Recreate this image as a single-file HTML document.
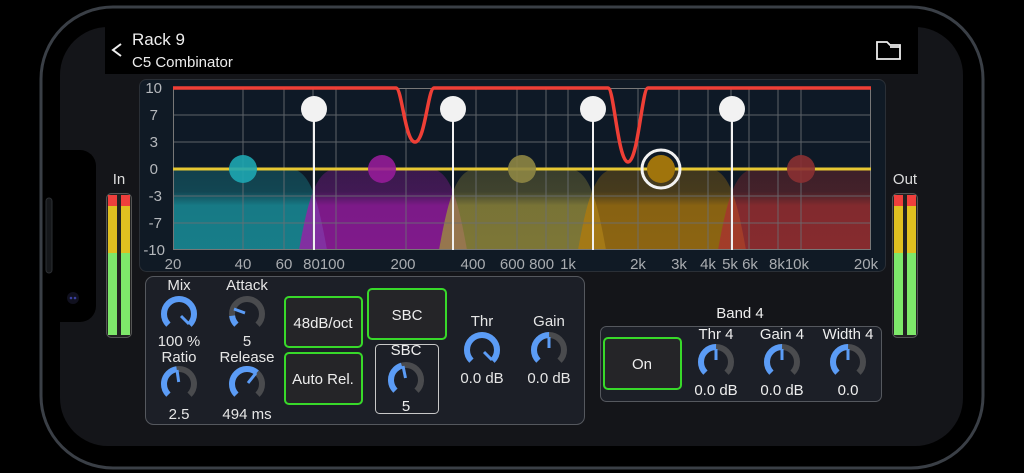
<!DOCTYPE html>
<html><head><meta charset="utf-8"><style>
html,body{margin:0;padding:0;background:#000;width:1024px;height:473px;overflow:hidden}
svg{position:absolute;left:0;top:0}
text{font-family:"Liberation Sans","DejaVu Sans",sans-serif}
</style></head><body>
<svg width="1024" height="473" viewBox="0 0 1024 473">
<defs>
<linearGradient id="gc" x1="0" y1="169" x2="0" y2="250" gradientUnits="userSpaceOnUse"><stop offset="0" stop-color="#1a9aa5" stop-opacity=".3"/><stop offset=".28" stop-color="#1a9aa5" stop-opacity=".35"/><stop offset=".45" stop-color="#1a9aa5" stop-opacity=".75"/><stop offset="1" stop-color="#1a9aa5" stop-opacity=".78"/></linearGradient>
<linearGradient id="gm" x1="0" y1="169" x2="0" y2="250" gradientUnits="userSpaceOnUse"><stop offset="0" stop-color="#a01aa8" stop-opacity=".3"/><stop offset=".28" stop-color="#a01aa8" stop-opacity=".35"/><stop offset=".45" stop-color="#a01aa8" stop-opacity=".75"/><stop offset="1" stop-color="#a01aa8" stop-opacity=".78"/></linearGradient>
<linearGradient id="gy" x1="0" y1="169" x2="0" y2="250" gradientUnits="userSpaceOnUse"><stop offset="0" stop-color="#9c913c" stop-opacity=".3"/><stop offset=".28" stop-color="#9c913c" stop-opacity=".35"/><stop offset=".45" stop-color="#9c913c" stop-opacity=".75"/><stop offset="1" stop-color="#9c913c" stop-opacity=".78"/></linearGradient>
<linearGradient id="go" x1="0" y1="169" x2="0" y2="250" gradientUnits="userSpaceOnUse"><stop offset="0" stop-color="#b07a0c" stop-opacity=".3"/><stop offset=".28" stop-color="#b07a0c" stop-opacity=".35"/><stop offset=".45" stop-color="#b07a0c" stop-opacity=".75"/><stop offset="1" stop-color="#b07a0c" stop-opacity=".78"/></linearGradient>
<linearGradient id="gr" x1="0" y1="169" x2="0" y2="250" gradientUnits="userSpaceOnUse"><stop offset="0" stop-color="#a83030" stop-opacity=".3"/><stop offset=".28" stop-color="#a83030" stop-opacity=".35"/><stop offset=".45" stop-color="#a83030" stop-opacity=".75"/><stop offset="1" stop-color="#a83030" stop-opacity=".78"/></linearGradient>
<g id="k" fill="none" stroke-width="6"><circle r="15" stroke="#4a4b4e" stroke-dasharray="70.69 100" transform="rotate(135)"/></g>
</defs>
<rect x="41" y="7" width="942" height="461" rx="72" fill="#000" stroke="#3a3f46" stroke-width="3"/>
<rect x="60" y="27" width="903" height="419" rx="48" fill="#141519"/>
<path d="M50,150 H80 a16,16 0 0 1 16,16 V306 a16,16 0 0 1 -16,16 H50 Z" fill="#000"/>
<rect x="46" y="198" width="6" height="75" rx="3" fill="#16181b" stroke="#2c2f33"/>
<circle cx="73" cy="298" r="6" fill="#10101e"/><circle cx="71" cy="298" r="1.3" fill="#3a40a0"/><circle cx="75" cy="298" r="1.3" fill="#3a40a0"/>
<rect x="105" y="27" width="813" height="47" fill="#000"/>
<path d="M121,44 L113,50 L121,56" fill="none" stroke="#eee" stroke-width="2"/>
<text x="132" y="45" font-size="17" fill="#eee">Rack 9</text>
<text x="132" y="67" font-size="15" fill="#eee">C5 Combinator</text>
<path d="M877,42 H887 L890,45 H900 V59 H877 Z M890,47 H900" fill="none" stroke="#eee" stroke-width="1.8"/>
<rect x="139.5" y="79.5" width="746" height="192" rx="7" fill="#101a25" stroke="#2a2f36"/>
<rect x="173" y="88" width="698" height="162" fill="#0e1926"/>
<g fill="#b5b8bc" font-size="15" text-anchor="end">
<text x="162" y="93">10</text><text x="158" y="120">7</text><text x="158" y="147">3</text><text x="158" y="174">0</text><text x="162" y="201">-3</text><text x="162" y="228">-7</text><text x="165" y="255">-10</text></g>
<path d="M173,250 V169 H290 C310,169 318,200 327,250 Z" fill="url(#gc)"/>
<path d="M299,250 C308,200 316,169 336,169 H430 C450,169 458,200 467,250 Z" fill="url(#gm)"/>
<path d="M439,250 C448,200 456,169 476,169 H569 C589,169 597,200 606,250 Z" fill="url(#gy)"/>
<path d="M578,250 C587,200 595,169 615,169 H709 C729,169 737,200 746,250 Z" fill="url(#go)"/>
<path d="M718,250 C727,200 735,169 755,169 H871 V250 Z" fill="url(#gr)"/>
<g stroke="#6b6f74" stroke-width="1" opacity=".85">
<path d="M173,115H871M173,142H871M173,196H871M173,223H871"/>
<path d="M243,88V250M284,88V250M313,88V250M336,88V250M406,88V250M476,88V250M517,88V250M546,88V250M568,88V250M638,88V250M679,88V250M708,88V250M731,88V250M749,88V250M778,88V250M801,88V250"/>
</g>
<rect x="173.5" y="88.5" width="697" height="161" fill="none" stroke="#777" stroke-width="1"/>
<g fill="#a9acb0" font-size="15" text-anchor="middle">
<text x="173" y="269">20</text><text x="243" y="269">40</text><text x="284" y="269">60</text><text x="324" y="269">80100</text><text x="403" y="269">200</text><text x="473" y="269">400</text><text x="527" y="269">600 800</text><text x="568" y="269">1k</text><text x="638" y="269">2k</text><text x="679" y="269">3k</text><text x="708" y="269">4k</text><text x="740" y="269">5k 6k</text><text x="789" y="269">8k10k</text><text x="866" y="269">20k</text></g>
<line x1="173" y1="169" x2="871" y2="169" stroke="#e7c832" stroke-width="3"/>
<circle cx="243" cy="169" r="14" fill="#1ea6b1" opacity=".9"/>
<circle cx="382" cy="169" r="14" fill="#951c98" opacity=".9"/>
<circle cx="522" cy="169" r="14" fill="#8e8644" opacity=".9"/>
<circle cx="661" cy="169" r="14" fill="#a0740c"/>
<circle cx="661" cy="169" r="19" fill="none" stroke="#f2f2f2" stroke-width="3"/>
<circle cx="801" cy="169" r="14" fill="#8a3032" opacity=".9"/>
<path d="M173,88 H396 C402,88 405,142 415,142 C425,142 428,88 434,88 H608 C614,88 618,162 628,162 C638,162 642,88 648,88 H871" fill="none" stroke="#ef3f36" stroke-width="3.5"/>
<g stroke="#f2f2f2" stroke-width="2"><path d="M314,109V250M453,109V250M593,109V250M732,109V250"/></g>
<g fill="#f2f2f2"><circle cx="314" cy="109" r="13"/><circle cx="453" cy="109" r="13"/><circle cx="593" cy="109" r="13"/><circle cx="732" cy="109" r="13"/></g>
<g>
<text x="119" y="184" font-size="15" fill="#ddd" text-anchor="middle">In</text>
<rect x="106.5" y="193.5" width="25" height="144" rx="5" fill="#222" stroke="#555"/>
<rect x="108" y="195" width="9" height="11" fill="#ef3f3c"/><rect x="108" y="206" width="9" height="47" fill="#e0c020"/><rect x="108" y="253" width="9" height="82" fill="#7ee86a"/>
<rect x="121" y="195" width="9" height="11" fill="#ef3f3c"/><rect x="121" y="206" width="9" height="47" fill="#e0c020"/><rect x="121" y="253" width="9" height="82" fill="#7ee86a"/>
<text x="905" y="184" font-size="15" fill="#ddd" text-anchor="middle">Out</text>
<rect x="892.5" y="193.5" width="25" height="144" rx="5" fill="#222" stroke="#555"/>
<rect x="894" y="195" width="9" height="11" fill="#ef3f3c"/><rect x="894" y="206" width="9" height="47" fill="#e0c020"/><rect x="894" y="253" width="9" height="82" fill="#7ee86a"/>
<rect x="907" y="195" width="9" height="11" fill="#ef3f3c"/><rect x="907" y="206" width="9" height="47" fill="#e0c020"/><rect x="907" y="253" width="9" height="82" fill="#7ee86a"/>
</g>
<rect x="145.5" y="276.5" width="439" height="148" rx="8" fill="#1c1f27" stroke="#55585e"/>
<g font-size="15" fill="#e6e6e6" text-anchor="middle">
<text x="179" y="290">Mix</text><text x="247" y="290">Attack</text>
<text x="179" y="346">100 %</text><text x="247" y="346">5</text>
<text x="179" y="362">Ratio</text><text x="247" y="362">Release</text>
<text x="179" y="419">2.5</text><text x="247" y="419">494 ms</text>
<text x="482" y="326">Thr</text><text x="549" y="326">Gain</text>
<text x="482" y="383">0.0 dB</text><text x="549" y="383">0.0 dB</text>
</g>
<g stroke="#38d92a" stroke-width="2" fill="#252528">
<rect x="285" y="297" width="77" height="50" rx="4"/>
<rect x="285" y="353" width="77" height="51" rx="4"/>
<rect x="368" y="289" width="78" height="50" rx="4"/>
</g>
<rect x="375.5" y="344.5" width="63" height="69" rx="4" fill="none" stroke="#c8c8c8"/>
<g font-size="15" fill="#eee" text-anchor="middle">
<text x="323" y="328">48dB/oct</text><text x="323" y="384">Auto Rel.</text>
<text x="407" y="320">SBC</text><text x="406" y="355">SBC</text><text x="406" y="411">5</text>
<text x="740" y="318">Band 4</text>
</g>
<rect x="600.5" y="326.5" width="281" height="75" rx="6" fill="#1c1f27" stroke="#55585e"/>
<g stroke="#38d92a" stroke-width="2" fill="#252528"><rect x="604" y="338" width="77" height="51" rx="4"/></g>
<g font-size="15" fill="#eee" text-anchor="middle">
<text x="642" y="369">On</text>
<text x="716" y="339">Thr 4</text><text x="782" y="339">Gain 4</text><text x="848" y="339">Width 4</text>
<text x="716" y="395">0.0 dB</text><text x="782" y="395">0.0 dB</text><text x="848" y="395">0.0</text>
</g>
<g fill="none" stroke-width="6">
<g transform="translate(179,314)"><use href="#k"/><circle r="15" stroke="#5b9cf6" stroke-dasharray="70.69 100" transform="rotate(135)"/><line x1="2" y1="2" x2="10" y2="10" stroke="#5b9cf6" stroke-width="3"/></g>
<g transform="translate(247,314)"><use href="#k"/><circle r="15" stroke="#5b9cf6" stroke-dasharray="10 100" transform="rotate(135)"/><line x1="-2" y1="-1" x2="-13" y2="-5" stroke="#5b9cf6" stroke-width="3"/></g>
<g transform="translate(179,384)"><use href="#k"/><circle r="15" stroke="#5b9cf6" stroke-dasharray="33 100" transform="rotate(135)"/><line x1="-0.3" y1="-2" x2="-2" y2="-14" stroke="#5b9cf6" stroke-width="3"/></g>
<g transform="translate(247,384)"><use href="#k"/><circle r="15" stroke="#5b9cf6" stroke-dasharray="46 100" transform="rotate(135)"/><line x1="1" y1="-1" x2="9" y2="-11" stroke="#5b9cf6" stroke-width="3"/></g>
<g transform="translate(406,380)"><use href="#k"/><circle r="15" stroke="#5b9cf6" stroke-dasharray="31 100" transform="rotate(135)"/><line x1="-0.5" y1="-2" x2="-3" y2="-14" stroke="#5b9cf6" stroke-width="3"/></g>
<g transform="translate(482,350)"><use href="#k"/><circle r="15" stroke="#5b9cf6" stroke-dasharray="70.69 100" transform="rotate(135)"/><line x1="2" y1="2" x2="10" y2="10" stroke="#5b9cf6" stroke-width="3"/></g>
<g transform="translate(549,350)"><use href="#k"/><circle r="15" stroke="#5b9cf6" stroke-dasharray="35.35 100" transform="rotate(135)"/><line x1="0" y1="-2" x2="0" y2="-13" stroke="#5b9cf6" stroke-width="3"/></g>
<g transform="translate(716,362)"><use href="#k"/><circle r="15" stroke="#5b9cf6" stroke-dasharray="35.35 100" transform="rotate(135)"/><line x1="0" y1="-2" x2="0" y2="-13" stroke="#5b9cf6" stroke-width="3"/></g>
<g transform="translate(782,362)"><use href="#k"/><circle r="15" stroke="#5b9cf6" stroke-dasharray="35.35 100" transform="rotate(135)"/><line x1="0" y1="-2" x2="0" y2="-13" stroke="#5b9cf6" stroke-width="3"/></g>
<g transform="translate(848,362)"><use href="#k"/><circle r="15" stroke="#5b9cf6" stroke-dasharray="35.35 100" transform="rotate(135)"/><line x1="0" y1="-2" x2="0" y2="-13" stroke="#5b9cf6" stroke-width="3"/></g>
</g>
</svg>
</body></html>
